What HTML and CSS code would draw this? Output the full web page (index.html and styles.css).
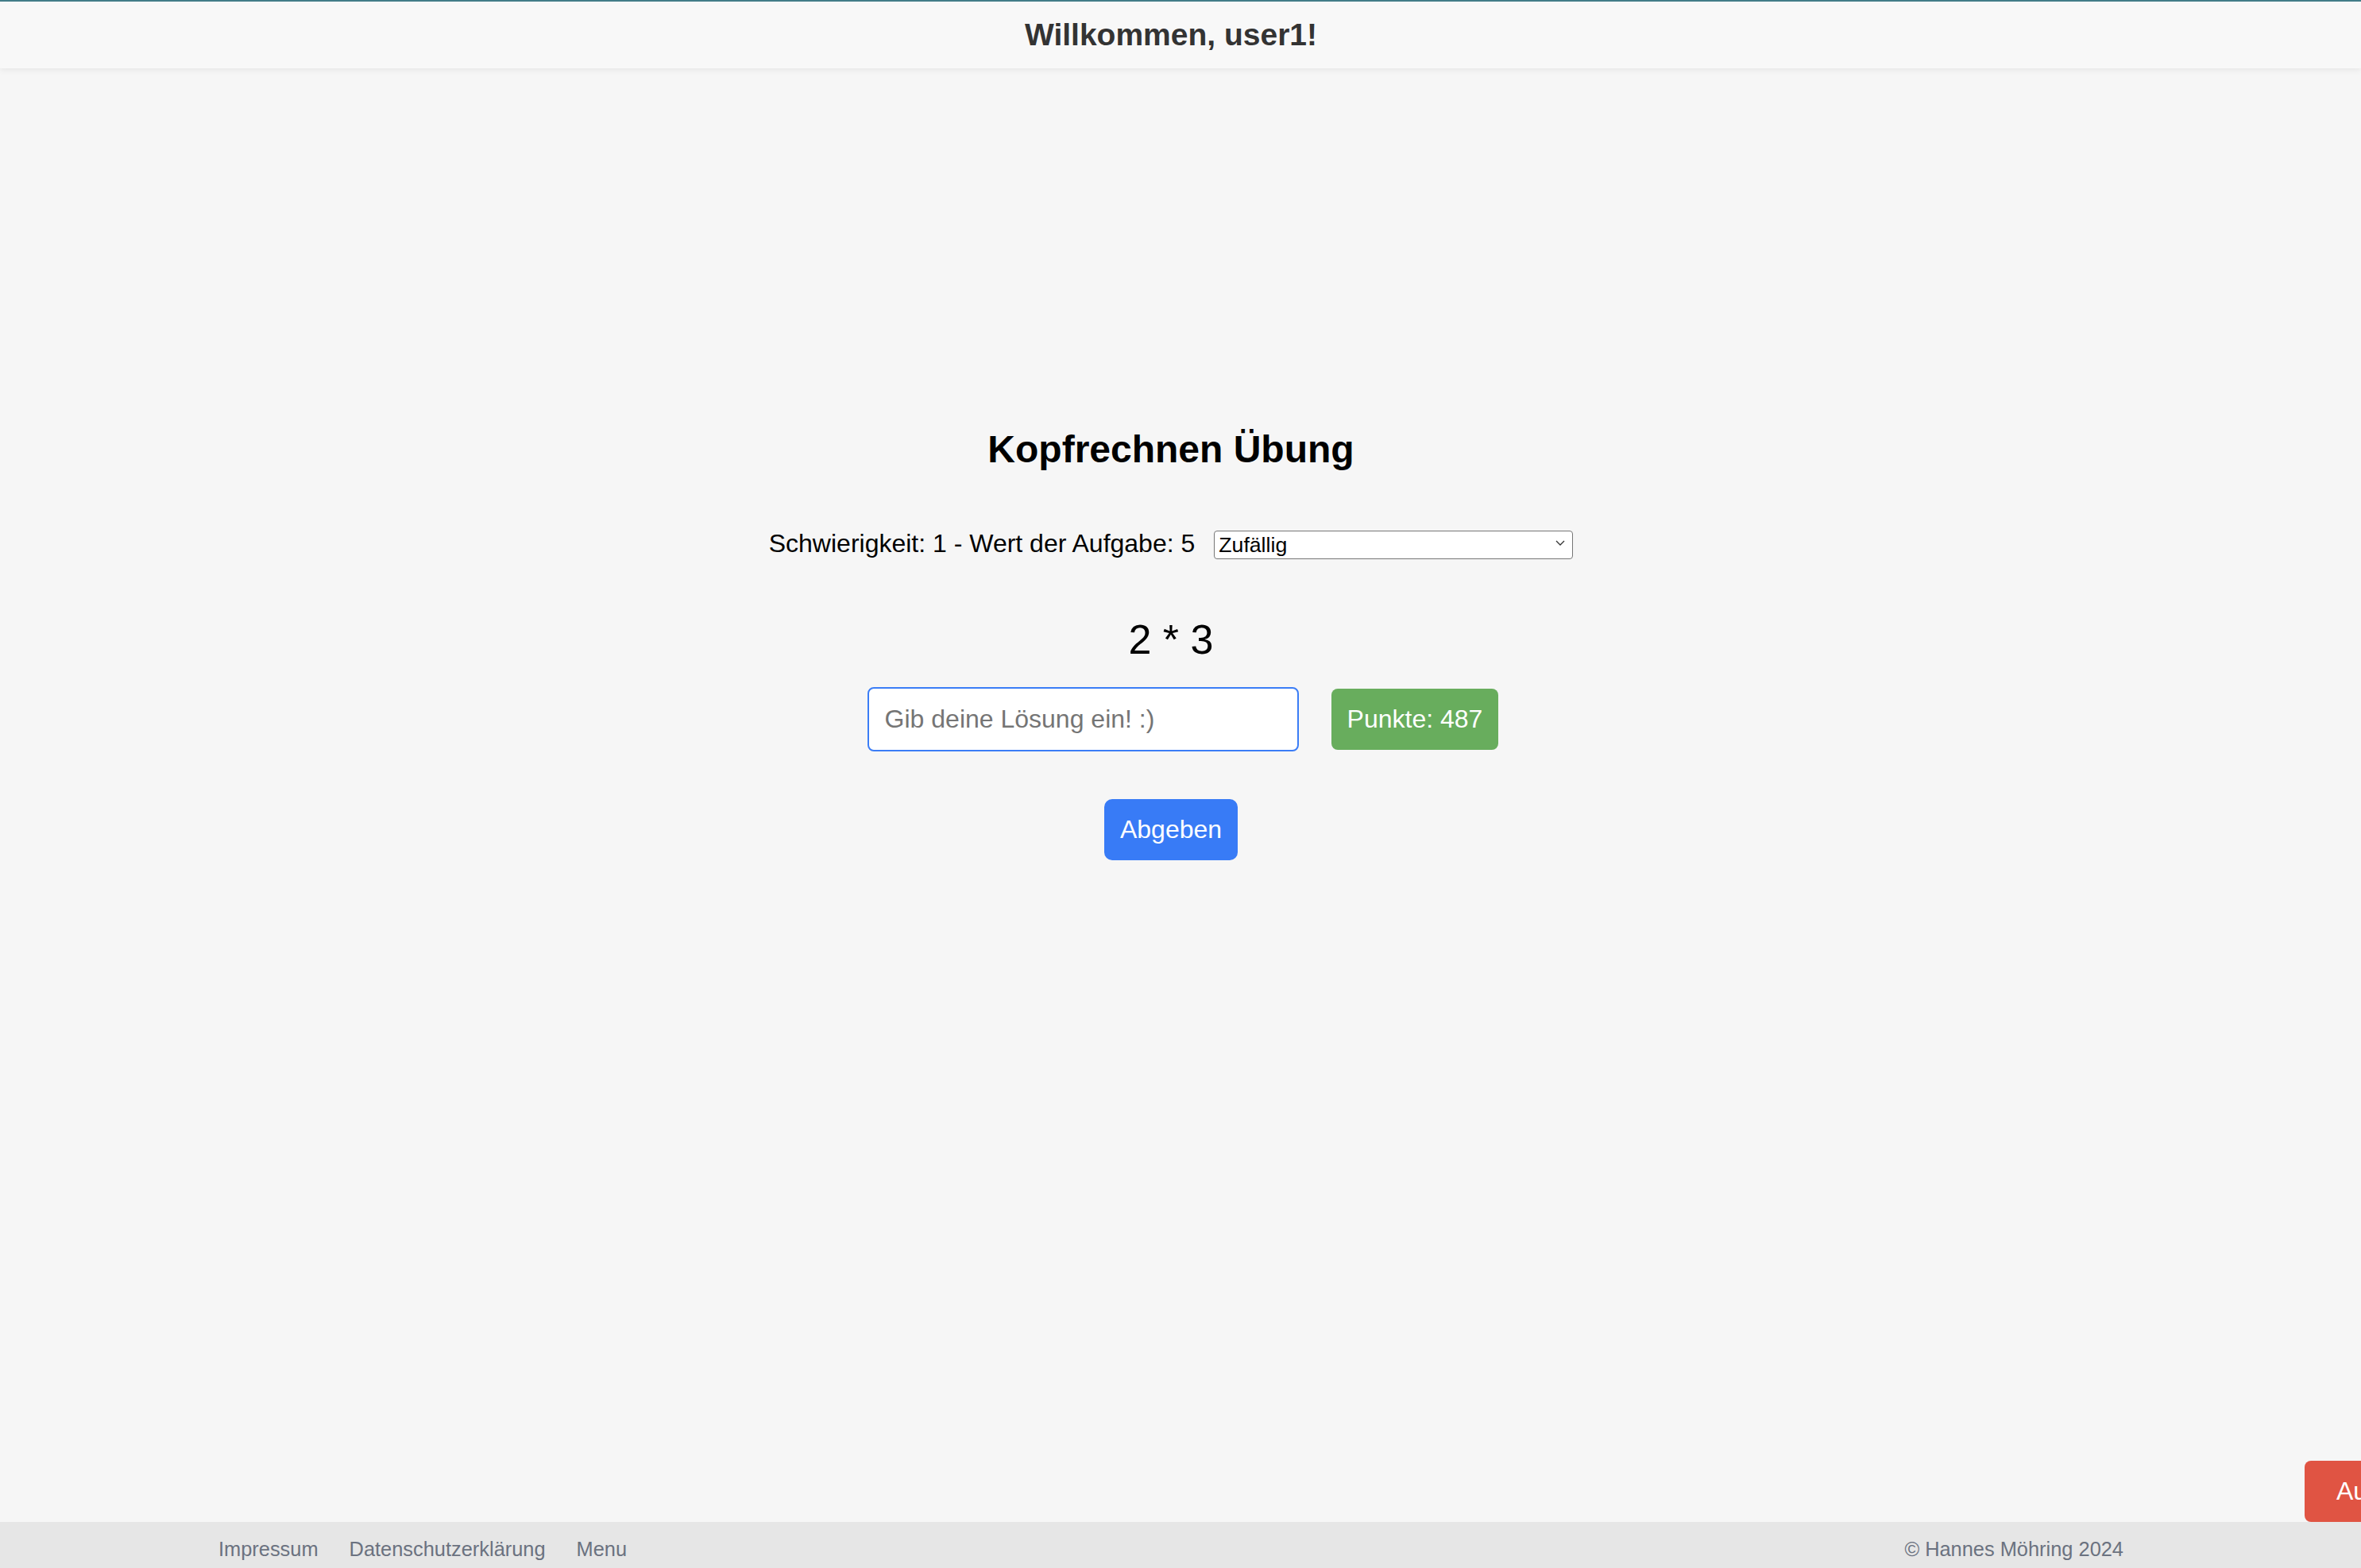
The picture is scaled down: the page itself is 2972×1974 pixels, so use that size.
FILE: index.html
```html
<!DOCTYPE html>
<html lang="de">
<head>
<meta charset="utf-8">
<title>Kopfrechnen Übung</title>
<link rel="stylesheet" href="styles.css">
</head>
<body>
<header class="site-header">
  <div class="header-inner">
    <h2 class="welcome">Willkommen, user1!</h2>
  </div>
</header>
<main class="main">
  <h1 class="title">Kopfrechnen Übung</h1>
  <div class="difficulty">
    <span class="difficulty-label">Schwierigkeit: 1 - Wert der Aufgabe: 5</span>
    <div class="select-wrap">
      <select class="select"><option>Zufällig</option></select>
      <svg class="chevron" width="12" height="7" viewBox="0 0 12 7"><path d="M1 1 L6 6 L11 1" fill="none" stroke="#333" stroke-width="1.3"/></svg>
    </div>
  </div>
  <div class="task">2 * 3</div>
  <div class="answer-row">
    <input class="answer" type="text" placeholder="Gib deine Lösung ein! :)">
    <div class="points">Punkte: 487</div>
  </div>
  <button class="submit">Abgeben</button>
</main>
<footer class="site-footer">
  <div class="footer-inner">
    <nav class="footer-links">
      <a href="#">Impressum</a>
      <a href="#">Datenschutzerklärung</a>
      <a href="#">Menu</a>
    </nav>
    <span class="copyright">© Hannes Möhring 2024</span>
  </div>
</footer>
<button class="logout">Ausloggen</button>
</body>
</html>
```
FILE: styles.css
```css
html, body {
  margin: 0;
  padding: 0;
  height: 100%;
  overflow: hidden;
}
body {
  position: relative;
  display: flex;
  flex-direction: column;
  background: #f6f6f6;
  font-family: "Liberation Sans", Arial, Helvetica, sans-serif;
  color: #000;
}
.site-header {
  position: relative;
  z-index: 1;
  height: 84px;
  border-top: 2px solid #437d88;
  background: #f8f8f8;
  box-shadow: 0 2px 8px rgba(0, 0, 0, 0.07);
}
.header-inner {
  width: calc(100% - 24px);
  text-align: center;
}
.welcome {
  margin: 0;
  font-size: 39px;
  line-height: 84px;
  font-weight: bold;
  color: #333;
}
.main {
  flex: 1;
  width: calc(100% - 24px);
  display: flex;
  flex-direction: column;
  align-items: center;
  padding-top: 452px;
}
.title {
  margin: 0;
  font-size: 48px;
  line-height: 56px;
  font-weight: bold;
}
.difficulty {
  margin-top: 71px;
  height: 38px;
  display: flex;
  align-items: center;
  gap: 24px;
  font-size: 32px;
  line-height: 38px;
}
.select-wrap {
  position: relative;
  width: 452px;
  height: 36px;
  margin-bottom: 3px;
}
.select {
  appearance: none;
  -webkit-appearance: none;
  width: 100%;
  height: 100%;
  box-sizing: border-box;
  border: 1px solid #767676;
  border-radius: 4px;
  background: #fff;
  font-family: "Liberation Sans", Arial, sans-serif;
  font-size: 26.67px;
  color: #000;
  padding: 0 0 0 5px;
  margin: 0;
}
.chevron {
  position: absolute;
  right: 10px;
  top: 15px;
  pointer-events: none;
}
.task {
  margin-top: 72px;
  font-size: 52px;
  line-height: 60px;
}
.answer-row {
  margin-top: 30px;
  margin-left: 30px;
  display: flex;
  align-items: center;
  gap: 41px;
}
.answer {
  box-sizing: border-box;
  width: 543px;
  height: 81px;
  border: 2px solid #3b7df6;
  border-radius: 8px;
  background: #fff;
  padding: 0 20px;
  font-family: "Liberation Sans", Arial, sans-serif;
  font-size: 32px;
  outline: none;
}
.answer::placeholder {
  color: #757575;
}
.points {
  height: 77px;
  line-height: 77px;
  padding: 0 20px;
  background: #68ad5d;
  color: #fff;
  font-size: 32px;
  border-radius: 8px;
}
.submit {
  margin-top: 60px;
  height: 77px;
  padding: 0 20px;
  border: none;
  border-radius: 10px;
  background: #387bf6;
  color: #fff;
  font-family: "Liberation Sans", Arial, sans-serif;
  font-size: 32px;
}
.site-footer {
  height: 58px;
  background: #e6e6e6;
}
.footer-inner {
  width: 2398px;
  margin-left: 275px;
  padding-top: 19px;
  display: flex;
  justify-content: space-between;
  font-size: 25.4px;
  line-height: 30px;
  color: #6b7280;
}
.footer-links {
  display: flex;
  gap: 39px;
}
.footer-links a {
  color: #6b7280;
  text-decoration: none;
}
.logout {
  position: absolute;
  left: 2901px;
  top: 1839px;
  height: 77px;
  padding: 0 40px;
  border: none;
  border-radius: 8px;
  background: #e05443;
  color: #fff;
  font-family: "Liberation Sans", Arial, sans-serif;
  font-size: 32px;
  white-space: nowrap;
}
```
